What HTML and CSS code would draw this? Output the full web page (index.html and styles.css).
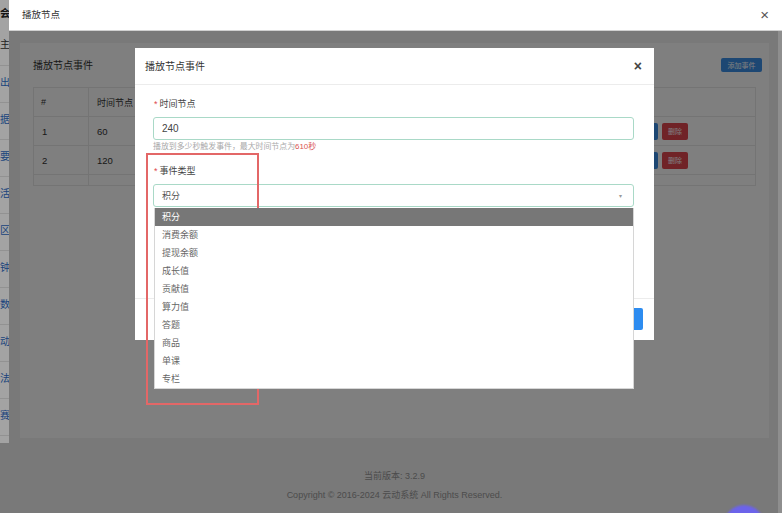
FILE: index.html
```html
<!DOCTYPE html>
<html lang="zh-CN">
<head>
    <meta charset="UTF-8">
    <meta name="viewport" content="width=device-width, initial-scale=1.0">
    <title>播放节点</title>
    <link rel="stylesheet" href="styles.css">
</head>
<body>
    <aside class="sidebar">
        <div class="side-top">会</div>
        <div class="side-item dark">项目主</div>
        <div class="side-item">视频导出</div>
        <div class="side-item">数据</div>
        <div class="side-item">摘要</div>
        <div class="side-item">活动生活</div>
        <div class="side-item">分享·区</div>
        <div class="side-item">时钟</div>
        <div class="side-item">参数</div>
        <div class="side-item">互动</div>
        <div class="side-item">方法</div>
        <div class="side-item">比赛</div>
    </aside>
    <div class="page-shade"></div>

    <div class="layer">
        <div class="layer-head">
            <span class="layer-title">播放节点</span>
            <span class="layer-close">&times;</span>
        </div>
        <div class="layer-body">
            <div class="card">
                <div class="card-head">
                    <span>播放节点事件</span>
                    <button type="button" class="btn btn-blue btn-add">添加事件</button>
                </div>
                <table class="tbl">
                    <tr>
                        <th class="col-no">#</th>
                        <th>时间节点</th>
                        <th>事件类型</th>
                        <th>数值</th>
                        <th class="col-op">操作</th>
                    </tr>
                    <tr>
                        <td>1</td>
                        <td>60</td>
                        <td>积分</td>
                        <td>10</td>
                        <td><button type="button" class="btn btn-blue">编辑</button><button type="button" class="btn btn-red">删除</button></td>
                    </tr>
                    <tr>
                        <td>2</td>
                        <td>120</td>
                        <td>积分</td>
                        <td>20</td>
                        <td><button type="button" class="btn btn-blue">编辑</button><button type="button" class="btn btn-red">删除</button></td>
                    </tr>
                    <tr class="row-empty"><td></td><td></td><td></td><td></td><td></td></tr>
                </table>
            </div>
            <div class="footer">
                <p>当前版本: 3.2.9</p>
                <p>Copyright &copy; 2016-2024 云动系统 All Rights Reserved.</p>
            </div>

            <div class="shade"></div>

            <div class="modal">
                <div class="modal-head">
                    <span>播放节点事件</span>
                    <span class="modal-close">&times;</span>
                </div>
                <div class="modal-body">
                    <label class="field-label"><i>*</i>时间节点</label>
                    <input type="text" class="field-input" value="240">
                    <p class="field-help">播放到多少秒触发事件，最大时间节点为<b>610秒</b></p>

                    <label class="field-label second"><i>*</i>事件类型</label>
                    <div class="select">
                        <div class="select-box">
                            <span>积分</span>
                            <span class="caret">&#9662;</span>
                        </div>
                        <ul class="options">
                            <li class="on">积分</li>
                            <li>消费余额</li>
                            <li>提现余额</li>
                            <li>成长值</li>
                            <li>贡献值</li>
                            <li>算力值</li>
                            <li>答题</li>
                            <li>商品</li>
                            <li>单课</li>
                            <li>专栏</li>
                        </ul>
                    </div>
                </div>
                <div class="modal-foot">
                    <button type="button" class="btn-ok">确定</button>
                </div>
            </div>

            <div class="fab"></div>
        </div>
    </div>

    <div class="mark"></div>
</body>
</html>
```

FILE: styles.css
```css
*{
    margin: 0;
    padding: 0;
    box-sizing: border-box;
    font-family: "Liberation Sans", "Noto Sans CJK SC", sans-serif;
}
body{
    width: 782px;
    height: 513px;
    overflow: hidden;
    background: #bdbdbd;
    position: relative;
}

/* page behind the layer */
.sidebar{
    width: 120px;
    height: 443px;
    background: #fff;
    display: flex;
    flex-direction: column;
    margin-left: -110px;
}
.side-top{
    height: 30px;
    line-height: 28px;
    text-align: right;
    font-size: 10px;
    font-weight: 700;
    color: #222;
}
.side-item{
    height: 37px;
    line-height: 34px;
    text-align: right;
    font-size: 10px;
    color: #2d6bc4;
    border-bottom: 1px solid #e4e4e4;
    white-space: nowrap;
}
.side-item.dark{
    color: #333;
    height: 36px;
    line-height: 30px;
}
.page-shade{
    position: absolute;
    inset: 0;
    background: rgba(0,0,0,.36);
}

/* outer layer */
.layer{
    position: absolute;
    left: 9px;
    top: 0;
    right: 0;
    bottom: 0;
    background: #8e8e8e;
    display: flex;
    flex-direction: column;
}
.layer-head{
    height: 31px;
    background: #fff;
    border-bottom: 1px solid #d0d0d0;
    display: flex;
    align-items: center;
    justify-content: space-between;
    padding: 0 13px 2px 13px;
    font-size: 9.5px;
    color: #333;
}
.layer-close{
    font-size: 15px;
    color: #555;
}
.layer-body{
    flex: 1;
    margin-right: 4px;
    background: #f2f2f2;
    position: relative;
    padding: 12px 9px 0 11px;
}
.card{
    background: #fff;
    height: 395px;
    padding: 10px 13px;
}
.card-head{
    height: 22px;
    margin-bottom: 12px;
    display: flex;
    align-items: center;
    justify-content: space-between;
    font-size: 10px;
    color: #333;
}
.btn{
    border: none;
    color: #fff;
    font-size: 7px;
    border-radius: 2px;
    height: 17px;
    padding: 0 6px;
}
.btn-blue{
    background: #3a8ee6;
}
.btn-red{
    background: #e0474f;
    margin-left: 4px;
}
.btn-add{
    height: 14px;
    width: 41px;
    margin-right: -6px;
    margin-top: 1px;
}
.tbl{
    width: 100%;
    border-collapse: collapse;
    border: 1px solid #e9e9e9;
    font-size: 9px;
    color: #333;
}
.tbl th,
.tbl td{
    height: 29px;
    text-align: left;
    font-weight: 400;
    padding: 0 8px;
    border-bottom: 1px solid #e9e9e9;
    border-right: 1px solid #e9e9e9;
}
.tbl td{
    font-size: 9.5px;
}
.tbl .col-no{
    width: 55px;
    padding-left: 7px;
}
.tbl .col-op{
    width: 132px;
}
.tbl .row-empty td{
    height: 11px;
    border-bottom: none;
}
.footer{
    text-align: center;
    font-size: 9px;
    color: #999;
    padding-top: 31px;
}
.footer p{
    height: 19px;
}

/* inner modal */
.shade{
    position: absolute;
    inset: 0;
    background: rgba(0,0,0,.5);
}
.modal{
    position: absolute;
    top: 17px;
    left: 126px;
    width: 519px;
    height: 292px;
    background: #fff;
    display: flex;
    flex-direction: column;
}
.modal-head{
    height: 37px;
    border-bottom: 1px solid #ececec;
    display: flex;
    align-items: center;
    justify-content: space-between;
    padding: 0 12px 1px 10px;
    font-size: 10px;
    color: #333;
}
.modal-close{
    font-size: 14px;
    font-weight: 700;
    color: #444;
}
.modal-body{
    flex: 1;
    padding: 12px 20px 0 18px;
    display: flex;
    flex-direction: column;
}
.field-label{
    display: block;
    height: 14px;
    line-height: 14px;
    font-size: 9px;
    color: #444;
}
.field-label i{
    font-style: normal;
    color: #e0474f;
    margin-right: 2px;
    padding-left: 1px;
}
.field-label.second{
    margin-top: 12px;
}
.field-input{
    margin-top: 6px;
    height: 23px;
    width: 481px;
    border: 1px solid #a9d9c7;
    border-radius: 3px;
    padding: 0 8px;
    font-size: 10px;
    color: #444;
    outline: none;
}
.field-help{
    margin-top: 2px;
    height: 10px;
    line-height: 10px;
    font-size: 7.9px;
    color: #aaa;
}
.field-help b{
    color: #d9534f;
    font-weight: 400;
}
.select{
    position: relative;
    margin-top: 6px;
    width: 481px;
}
.select-box{
    height: 23px;
    border: 1px solid #a9d9c7;
    border-radius: 3px;
    padding: 0 8px;
    display: flex;
    align-items: center;
    justify-content: space-between;
    font-size: 9px;
    color: #555;
}
.caret{
    font-size: 6px;
    color: #999;
    margin-right: 3px;
}
.options{
    list-style: none;
    position: absolute;
    top: 24px;
    left: 1px;
    right: 0;
    background: #fff;
    border: 1px solid #d6d6d6;
    border-top: none;
    z-index: 2;
}
.options li{
    height: 18px;
    line-height: 18px;
    padding-left: 7px;
    font-size: 9px;
    color: #666;
}
.options li.on{
    background: #777;
    color: #fff;
}
.modal-foot{
    height: 42px;
    border-top: 1px solid #ececec;
    display: flex;
    align-items: center;
    justify-content: flex-end;
    padding: 0 11px 1px 0;
}
.btn-ok{
    border: none;
    height: 22px;
    padding: 0 10px;
    background: #2d8cf0;
    color: #fff;
    font-size: 9px;
    border-radius: 2px;
}

.fab{
    position: absolute;
    right: 14px;
    bottom: -32px;
    width: 40px;
    height: 40px;
    border-radius: 50%;
    background: #6c63ea;
    filter: blur(1px);
}

/* red annotation frame */
.mark{
    position: absolute;
    left: 146px;
    top: 153px;
    width: 113px;
    height: 252px;
    border: 2px solid #e36767;
    pointer-events: none;
}
```
